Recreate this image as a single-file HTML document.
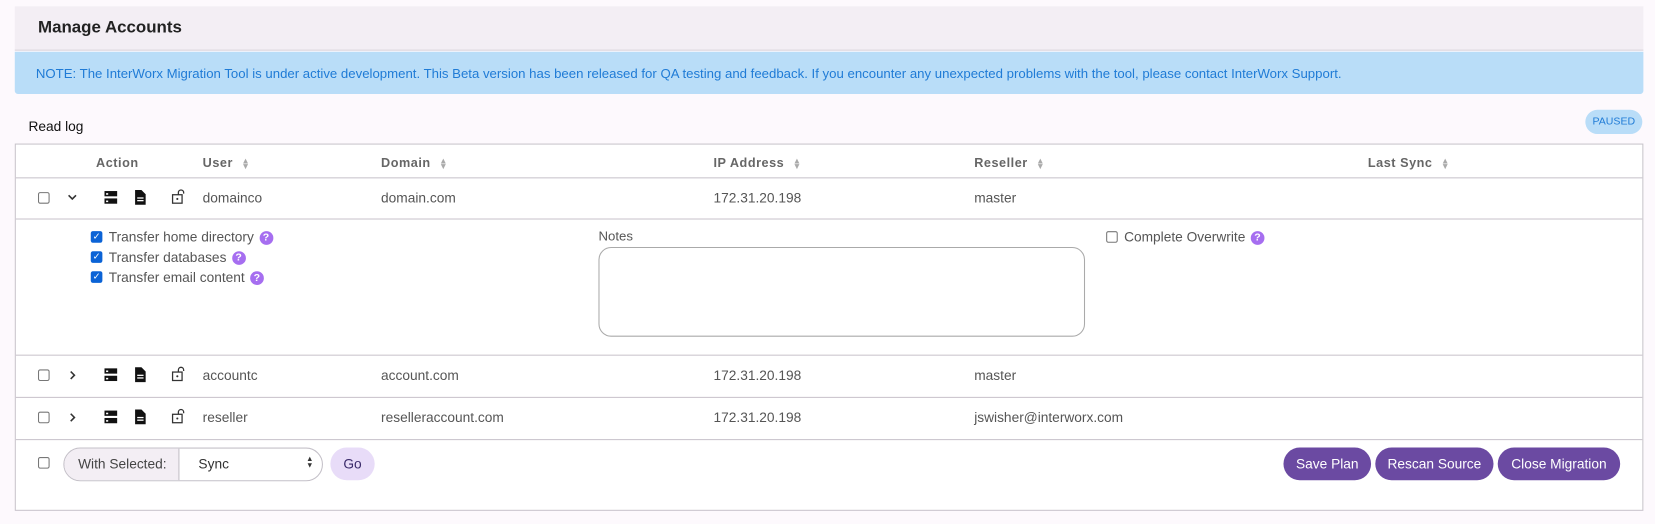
<!DOCTYPE html>
<html><head><style>
*{box-sizing:border-box;margin:0;padding:0}
html,body{width:1655px;height:524px;overflow:hidden}
body{background:#fdf9fd;font-family:"Liberation Sans",sans-serif;font-size:13px;color:#555;position:relative}
#w{position:absolute;left:0;top:0;width:1568px;height:497px;transform:scale(1.05548);transform-origin:0 0}
.a{position:absolute}
.hdr{left:14px;top:6px;width:1543px;height:42px;background:#f3eef4;border-bottom:1px solid #d9d4dc}
.hdr span{position:absolute;left:22px;top:12px;font-size:16px;color:#222;font-weight:bold}
.note{left:14px;top:49px;width:1543px;height:40px;background:#b9ddf8;color:#1f7bd6;font-size:12.5px;padding:14px 0 0 20px;border-radius:0 0 3px 3px}
.box{left:14px;top:136px;width:1543px;height:348px;border:1px solid #c9c4cc;background:#fff}
.hl{left:15px;width:1541px;height:1px;background:#c9c4cc}
.th{top:147px;font-size:12px;letter-spacing:.5px;font-weight:bold;color:#666}
.sort{display:inline-block;margin-left:8px;color:#aaa;font-size:8px;line-height:5px;vertical-align:middle}
.cb{width:11px;height:11px;border:1px solid #777;border-radius:2px;background:#fff}
.cbc{width:11px;height:11px;border-radius:2px;background:#0b63d6;color:#fff;font-size:9px;line-height:11px;text-align:center}
.q{display:inline-block;width:13px;height:13px;border-radius:50%;background:#a66ef0;color:#fff;font-size:10px;font-weight:bold;text-align:center;line-height:13px;margin-left:5px;vertical-align:1px}
.btn{top:424px;height:31px;background:#6b4aa2;color:#fff;border-radius:16px;font-size:13px;text-align:center;line-height:31px}
</style></head><body><div id="w">
<div class="a hdr"><span>Manage Accounts</span></div>
<div class="a note">NOTE: The InterWorx Migration Tool is under active development. This Beta version has been released for QA testing and feedback. If you encounter any unexpected problems with the tool, please contact InterWorx Support.</div>
<div class="a" style="left:27px;top:112px;color:#111;font-size:13px">Read log</div>
<div class="a" style="left:1502px;top:104px;width:54px;height:23px;border-radius:12px;background:#b9ddf8;color:#1f7bd6;font-size:10px;line-height:23px;text-align:center">PAUSED</div>
<div class="a box"></div>
<div class="a hl" style="top:168px"></div>
<div class="a hl" style="top:207px"></div>
<div class="a hl" style="top:336px"></div>
<div class="a hl" style="top:376px"></div>
<div class="a hl" style="top:416px"></div>
<div class="a th" style="left:91px">Action</div>
<div class="a th" style="left:192px">User<span class="sort">▲<br>▼</span></div>
<div class="a th" style="left:361px">Domain<span class="sort">▲<br>▼</span></div>
<div class="a th" style="left:676px">IP Address<span class="sort">▲<br>▼</span></div>
<div class="a th" style="left:923px">Reseller<span class="sort">▲<br>▼</span></div>
<div class="a th" style="left:1296px">Last Sync<span class="sort">▲<br>▼</span></div>

<svg class="a" style="left:0;top:0" width="1568" height="497">
<defs>
<g id="ic">
<rect x="0" y="-6" width="12" height="5" fill="#111"/><rect x="0" y="1" width="12" height="5" fill="#111"/><rect x="1.5" y="-4" width="2" height="1.5" fill="#fff"/><rect x="1.5" y="3" width="2" height="1.5" fill="#fff"/>
<path d="M29 -7h6l4 4v10h-10z" fill="#111"/><rect x="31" y="0" width="6" height="1.2" fill="#fff"/><rect x="31" y="2.5" width="6" height="1.2" fill="#fff"/>
<rect x="64.5" y="-2.5" width="9" height="8" fill="none" stroke="#333" stroke-width="1.2"/><circle cx="69" cy="1.5" r="1" fill="#333"/><path d="M70 -2.5v-2a2.5 2.5 0 0 1 5 0v1" fill="none" stroke="#333" stroke-width="1.2"/>
</g>
</defs>
<use href="#ic" x="99" y="187"/>
<use href="#ic" x="99" y="355"/>
<use href="#ic" x="99" y="395"/>
<path d="M65 185l3.5 3.5 3.5-3.5" fill="none" stroke="#333" stroke-width="1.5"/>
<path d="M67 352l3.5 3.5-3.5 3.5" fill="none" stroke="#333" stroke-width="1.5"/>
<path d="M67 392l3.5 3.5-3.5 3.5" fill="none" stroke="#333" stroke-width="1.5"/>
</svg>
<div class="a cb" style="left:36px;top:182px"></div>
<div class="a cb" style="left:36px;top:350px"></div>
<div class="a cb" style="left:36px;top:390px"></div>
<div class="a cb" style="left:36px;top:433px"></div>
<div class="a" style="left:192px;top:180px">domainco</div>
<div class="a" style="left:361px;top:180px">domain.com</div>
<div class="a" style="left:676px;top:180px">172.31.20.198</div>
<div class="a" style="left:923px;top:180px">master</div>
<div class="a" style="left:192px;top:348px">accountc</div>
<div class="a" style="left:361px;top:348px">account.com</div>
<div class="a" style="left:676px;top:348px">172.31.20.198</div>
<div class="a" style="left:923px;top:348px">master</div>
<div class="a" style="left:192px;top:388px">reseller</div>
<div class="a" style="left:361px;top:388px">reselleraccount.com</div>
<div class="a" style="left:676px;top:388px">172.31.20.198</div>
<div class="a" style="left:923px;top:388px">jswisher@interworx.com</div>

<div class="a cbc" style="left:86px;top:219px">✓</div>
<div class="a cbc" style="left:86px;top:238px">✓</div>
<div class="a cbc" style="left:86px;top:257px">✓</div>
<div class="a" style="left:103px;top:217px">Transfer home directory<span class="q">?</span></div>
<div class="a" style="left:103px;top:236px">Transfer databases<span class="q">?</span></div>
<div class="a" style="left:103px;top:255px">Transfer email content<span class="q">?</span></div>
<div class="a" style="left:567px;top:217px;font-size:12.5px;color:#555">Notes</div>
<div class="a" style="left:567px;top:234px;width:461px;height:85px;border:1px solid #aaa;border-radius:12px;background:#fff"></div>
<div class="a cb" style="left:1048px;top:219px"></div>
<div class="a" style="left:1065px;top:217px">Complete Overwrite<span class="q">?</span></div>

<div class="a" style="left:60px;top:424px;width:246px;height:32px;border:1px solid #c4c0c8;border-radius:16px;overflow:hidden;background:#fff">
<div style="position:absolute;left:0;top:0;width:109px;height:30px;background:#f3eef4;border-right:1px solid #c4c0c8;line-height:30px;padding-left:13px;color:#444">With Selected:</div>
<div style="position:absolute;left:127px;top:0;line-height:30px;color:#333">Sync</div>
<div style="position:absolute;right:8px;top:8px;font-size:7px;line-height:6px;color:#333">▲<br>▼</div>
</div>
<div class="a" style="left:313px;top:424px;width:42px;height:31px;border-radius:16px;background:#e8dcf8;color:#3a2a6a;line-height:31px;text-align:center">Go</div>
<div class="a btn" style="left:1216px;width:83px">Save Plan</div>
<div class="a btn" style="left:1303px;width:112px">Rescan Source</div>
<div class="a btn" style="left:1419px;width:116px">Close Migration</div>
</div></body></html>
